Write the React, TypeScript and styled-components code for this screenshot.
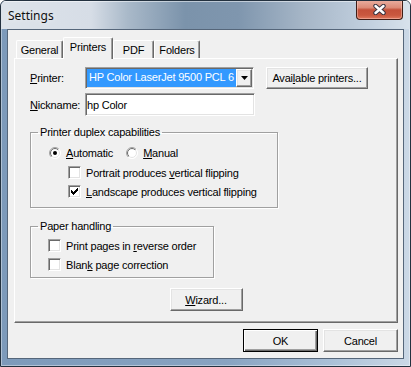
import React from "react";
import styled, { createGlobalStyle, css } from "styled-components";

const uiFont = `"Liberation Sans", Arial, sans-serif`;

const GlobalStyle = createGlobalStyle`
  html, body {
    margin: 0;
    padding: 0;
    background: #fff;
  }
  #root {
    width: 411px;
    height: 367px;
  }
`;

const Window = styled.div`
  box-sizing: border-box;
  width: 411px;
  height: 367px;
  display: flex;
  flex-direction: column;
  border: 1px solid #23313f;
  border-radius: 6px 6px 0 0;
  background: linear-gradient(90deg, #7d9aba 0%, #88a3c1 55%, #a9bfd6 80%, #cbd8e6 100%);
  box-shadow: inset 0 0 0 1px rgba(255, 255, 255, 0.4);
  font-family: ${uiFont};
  font-size: 11px;
  letter-spacing: -0.2px;
  color: #000;
  overflow: hidden;
`;

const TitleBar = styled.div`
  height: 28px;
  display: flex;
  align-items: flex-start;
  justify-content: space-between;
  background: linear-gradient(90deg, #dde3ea 0%, #d6dde6 22%, #a9b9c9 31%, #7b93ab 45%, #7f96ae 58%, #a6b6c7 74%, #c2d0df 90%, #d8e2ec 100%);
  border-top: 1px solid rgba(255, 255, 255, 0.5);
  box-sizing: border-box;
`;

const Title = styled.span`
  font-family: "Noto Sans", "Open Sans", sans-serif;
  font-size: 12px;
  letter-spacing: 0;
  line-height: 16px;
  margin: 6px 0 0 7px;
  color: #101010;
  text-shadow: 0 0 6px rgba(255, 255, 255, 0.7);
`;

const CloseButton = styled.div`
  box-sizing: border-box;
  width: 47px;
  height: 20px;
  margin: -2px 7px 0 0;
  border: 1px solid #3f1d16;
  border-top: none;
  border-radius: 0 0 4px 4px;
  background: linear-gradient(180deg, #eab0a2 0%, #dc8b77 40%, #c4513a 52%, #c9583f 80%, #e07a5f 100%);
  box-shadow: inset 0 0 0 1px rgba(255, 210, 200, 0.45);
  display: flex;
  align-items: center;
  justify-content: center;
`;

const Client = styled.div`
  flex: 1;
  margin: 0 6px 7px 6px;
  border: 1px solid #55667a;
  background: #f0f0f0;
  display: flex;
  flex-direction: column;
  padding: 7px 5px 0 6px;
`;

const TabStrip = styled.div`
  display: flex;
  align-items: flex-end;
  height: 21px;
  padding-left: 2px;
  position: relative;
  z-index: 1;
`;

const Tab = styled.div<{ $active?: boolean; $w: number }>`
  box-sizing: border-box;
  width: ${(p) => p.$w}px;
  height: ${(p) => (p.$active ? 22 : 18)}px;
  margin-bottom: ${(p) => (p.$active ? -1 : 0)}px;
  border: 1px solid;
  border-color: #fff #696969 transparent #fff;
  border-bottom: none;
  border-radius: 2px 2px 0 0;
  box-shadow: inset -1px 0 0 #a0a0a0;
  background: #f0f0f0;
  display: flex;
  align-items: center;
  justify-content: center;
  padding: ${(p) => (p.$active ? "0 0 3px" : "1px 0 0")};
`;

const Panel = styled.div`
  box-sizing: border-box;
  height: 265px;
  border: 1px solid;
  border-color: #fff #696969 #696969 #fff;
  box-shadow: inset -1px -1px 0 #a0a0a0;
  padding: 8px 15px 0 15px;
  display: flex;
  flex-direction: column;
  align-items: flex-start;
`;

const FieldRow = styled.div<{ $top?: number }>`
  display: flex;
  align-items: center;
  margin-top: ${(p) => p.$top ?? 0}px;
`;

const FieldLabel = styled.span`
  width: 55px;
`;

const sunken = css`
  box-sizing: border-box;
  border: 1px solid;
  border-color: #a0a0a0 #fff #fff #a0a0a0;
  box-shadow: inset 1px 1px 0 #696969, inset -1px -1px 0 #e3e3e3;
  background: #fff;
`;

const raised = css`
  box-sizing: border-box;
  border: 1px solid;
  border-color: #fff #696969 #696969 #fff;
  box-shadow: inset -1px -1px 0 #a0a0a0, inset 1px 1px 0 #e3e3e3;
  background: #f0f0f0;
`;

const ComboBox = styled.div`
  ${sunken};
  width: 169px;
  height: 22px;
  padding: 1px;
  display: flex;
`;

const ComboValue = styled.div`
  flex: 1;
  min-width: 0;
  background: #3399ff;
  color: #fff;
  padding-left: 2px;
  white-space: nowrap;
  overflow: hidden;
  line-height: 17px;
`;

const ComboArrow = styled.div`
  ${raised};
  width: 16px;
  display: flex;
  align-items: center;
  justify-content: center;
`;

const TextBox = styled.input`
  ${sunken};
  width: 170px;
  height: 23px;
  padding: 0 0 0 1px;
  margin: 0;
  font-family: ${uiFont};
  font-size: 11px;
  letter-spacing: -0.2px;
  color: #000;
  outline: none;
`;

const Button = styled.button<{ $w: number; $h?: number; $left?: number; $default?: boolean }>`
  ${raised};
  width: ${(p) => p.$w}px;
  height: ${(p) => p.$h ?? 23}px;
  padding: 0;
  margin: 0 0 0 ${(p) => p.$left ?? 0}px;
  font-family: ${uiFont};
  font-size: 11px;
  letter-spacing: -0.2px;
  color: #000;
  ${(p) =>
    p.$default &&
    css`
      border-color: #000;
      box-shadow: inset 1px 1px 0 #fff, inset -1px -1px 0 #696969, inset -2px -2px 0 #a0a0a0;
    `}
`;

const Group = styled.fieldset<{ $w: number; $top: number }>`
  box-sizing: border-box;
  width: ${(p) => p.$w}px;
  margin: ${(p) => p.$top}px 0 0 0;
  padding: 0;
  min-width: 0;
  border: 1px solid #a0a0a0;
  box-shadow: 1px 1px 0 #fff, inset 1px 1px 0 #fff;
`;

const Legend = styled.legend`
  margin-left: 7px;
  padding: 0 2px;
  line-height: 13px;
  font-size: 11px;
`;

const GroupBody = styled.div<{ $pad: string }>`
  padding: ${(p) => p.$pad};
`;

const OptionRow = styled.div<{ $h: number; $indent?: number }>`
  display: flex;
  align-items: center;
  height: ${(p) => p.$h}px;
  margin-left: ${(p) => p.$indent ?? 0}px;
`;

const Option = styled.label<{ $gapAfter?: number }>`
  display: flex;
  align-items: center;
  gap: 5px;
  margin-right: ${(p) => p.$gapAfter ?? 0}px;
`;

const CheckBox = styled.span`
  ${sunken};
  width: 13px;
  height: 13px;
  display: flex;
  align-items: center;
  justify-content: center;
`;

const Center = styled.div`
  align-self: center;
  margin-top: 10px;
`;

const ButtonBar = styled.div`
  display: flex;
  justify-content: flex-end;
  gap: 5px;
  margin-top: 6px;
`;

const Key = styled.u`
  text-decoration: underline;
  text-underline-offset: 1px;
`;

const Check: React.FC = () => (
  <svg width="7" height="7" viewBox="0 0 7 7" shapeRendering="crispEdges">
    <path
      d="M0 2h1v3H0z M1 3h1v3H1z M2 4h1v3H2z M3 3h1v3H3z M4 2h1v3H4z M5 1h1v3H5z M6 0h1v3H6z"
      fill="#000"
    />
  </svg>
);

const CheckItem: React.FC<{ checked?: boolean; children: React.ReactNode }> = ({ checked, children }) => (
  <Option>
    <CheckBox>{checked && <Check />}</CheckBox>
    <span>{children}</span>
  </Option>
);

const Radio: React.FC<{ checked?: boolean }> = ({ checked }) => (
  <svg width="12" height="12" viewBox="0 0 12 12">
    <defs>
      <linearGradient id="radioOuter" x1="0" y1="0" x2="1" y2="1">
        <stop offset="0.5" stopColor="#a0a0a0" />
        <stop offset="0.5" stopColor="#ffffff" />
      </linearGradient>
      <linearGradient id="radioInner" x1="0" y1="0" x2="1" y2="1">
        <stop offset="0.5" stopColor="#696969" />
        <stop offset="0.5" stopColor="#e3e3e3" />
      </linearGradient>
    </defs>
    <circle cx="6" cy="6" r="5.5" fill="#fff" stroke="url(#radioOuter)" />
    <circle cx="6" cy="6" r="4.5" fill="none" stroke="url(#radioInner)" />
    {checked && <circle cx="6" cy="6" r="2" fill="#000" />}
  </svg>
);

const App: React.FC = () => {
  return (
    <>
      <GlobalStyle />
      <Window>
        <TitleBar>
          <Title>Settings</Title>
          <CloseButton>
            <svg width="13" height="11" viewBox="0 0 13 11">
              <path d="M2.5 2 L10.5 9 M10.5 2 L2.5 9" stroke="#3a3440" strokeWidth="4.4" strokeLinecap="round" />
              <path d="M2.5 2 L10.5 9 M10.5 2 L2.5 9" stroke="#fff" strokeWidth="2.4" strokeLinecap="round" />
            </svg>
          </CloseButton>
        </TitleBar>
        <Client>
          <TabStrip>
            <Tab $w={47}>General</Tab>
            <Tab $w={50} $active>Printers</Tab>
            <Tab $w={41}>PDF</Tab>
            <Tab $w={46}>Folders</Tab>
          </TabStrip>
          <Panel>
            <FieldRow>
              <FieldLabel>
                <Key>P</Key>rinter:
              </FieldLabel>
              <ComboBox>
                <ComboValue>HP Color LaserJet 9500 PCL 6</ComboValue>
                <ComboArrow>
                  <svg width="7" height="4" viewBox="0 0 7 4">
                    <path d="M0 0h7L3.5 4z" fill="#000" />
                  </svg>
                </ComboArrow>
              </ComboBox>
              <Button $w={102} $h={22} $left={12}>
                Avai<Key>l</Key>able printers...
              </Button>
            </FieldRow>
            <FieldRow $top={4}>
              <FieldLabel>
                <Key>N</Key>ickname:
              </FieldLabel>
              <TextBox value="hp Color" readOnly />
            </FieldRow>

            <Group $w={248} $top={10}>
              <Legend>Printer duplex capabilities</Legend>
              <GroupBody $pad="3px 0 6px 18px">
                <OptionRow $h={21}>
                  <Option $gapAfter={13}>
                    <Radio checked />
                    <span>
                      <Key>A</Key>utomatic
                    </span>
                  </Option>
                  <Option>
                    <Radio />
                    <span>
                      <Key>M</Key>anual
                    </span>
                  </Option>
                </OptionRow>
                <OptionRow $h={19} $indent={19}>
                  <CheckItem>
                    Portrait produces <Key>v</Key>ertical flipping
                  </CheckItem>
                </OptionRow>
                <OptionRow $h={19} $indent={19}>
                  <CheckItem checked>
                    <Key>L</Key>andscape produces vertical flipping
                  </CheckItem>
                </OptionRow>
              </GroupBody>
            </Group>

            <Group $w={184} $top={12}>
              <Legend>Paper handling</Legend>
              <GroupBody $pad="3px 0 3px 17px">
                <OptionRow $h={19}>
                  <CheckItem>
                    Print pages in <Key>r</Key>everse order
                  </CheckItem>
                </OptionRow>
                <OptionRow $h={19}>
                  <CheckItem>
                    Blan<Key>k</Key> page correction
                  </CheckItem>
                </OptionRow>
              </GroupBody>
            </Group>

            <Center>
              <Button $w={73}>
                <Key>W</Key>izard...
              </Button>
            </Center>
          </Panel>
          <ButtonBar>
            <Button $w={75} $default>
              OK
            </Button>
            <Button $w={75}>Cancel</Button>
          </ButtonBar>
        </Client>
      </Window>
    </>
  );
};

export default App;
